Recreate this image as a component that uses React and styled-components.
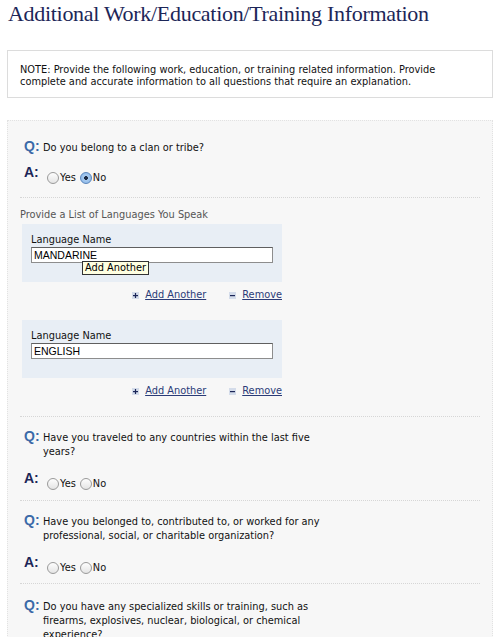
import React from 'react';
import styled, { createGlobalStyle } from 'styled-components';

const GlobalStyle = createGlobalStyle`
	body {
		margin: 0;
		background: #fff;
		font-family: "DejaVu Sans", Verdana, sans-serif;
		color: #111;
	}
`;

const Page = styled.div`
	width: 500px;
	padding: 0 7px;
	box-sizing: border-box;
`;

const Title = styled.h1`
	margin: 0;
	padding: 0 0 0 1px;
	height: 36px;
	line-height: 28px;
	font-family: "Liberation Serif", "Times New Roman", serif;
	font-weight: 400;
	font-size: 22px;
	letter-spacing: -0.3px;
	color: #1c2658;
`;

const NoteBox = styled.div`
	margin-top: 14px;
	height: 48px;
	box-sizing: border-box;
	border: 1px solid #dcdcdc;
	background: #fff;
	padding: 13px 12px 0;
`;

const NoteText = styled.p`
	margin: 0;
	max-width: 435px;
	font-size: 9.8px;
	line-height: 12px;
	color: #111;
`;

const Panel = styled.div`
	margin-top: 22px;
	background: #f7f7f7;
	border: 1px dotted #e2e2e2;
	padding: 0 13px 0 12px;
	height: 540px;
	box-sizing: border-box;
	overflow: hidden;
`;

const Question = styled.div`
	padding: ${({ $top }) => $top || 12}px 0 0 4px;
`;

const QRow = styled.div`
	display: flex;
	align-items: flex-start;
`;

const Letter = styled.span`
	width: 19px;
	flex: none;
	font-family: "Liberation Sans", Arial, sans-serif;
	font-weight: 700;
	font-size: 14px;
	line-height: 14px;
	color: ${({ $blue }) => ($blue ? '#3b6aa8' : '#1c2658')};
`;

const QText = styled.div`
	font-size: 9.8px;
	line-height: 14px;
	padding-top: 2px;
	max-width: 280px;
	color: #111;
`;

const ARow = styled.div`
	display: flex;
	align-items: flex-start;
	margin-top: ${({ $gap }) => $gap}px;
`;

const Options = styled.div`
	display: flex;
	align-items: center;
	gap: 4px;
	padding-top: 6px;
	margin-left: 4px;
`;

const Option = styled.label`
	display: flex;
	align-items: center;
	font-size: 9.8px;
	color: #111;
`;

const Radio = styled.span`
	width: 12px;
	height: 12px;
	border-radius: 50%;
	box-sizing: border-box;
	border: 1px solid ${({ $on }) => ($on ? '#5b86bb' : '#9a9a9a')};
	background: ${({ $on }) =>
		$on
			? 'radial-gradient(circle, #1b2a44 0 1.6px, #a9cbef 2.2px, #7fb0e6 100%)'
			: 'linear-gradient(#fdfdfd, #e4e4e4)'};
	margin-right: 1px;
	margin-top: 1px;
`;

const Divider = styled.div`
	border-top: 1px dotted #d6d6d6;
	margin-top: ${({ $mt }) => $mt}px;
	width: 460px;
`;

const SectionLabel = styled.div`
	margin-top: 11px;
	font-size: 9.8px;
	line-height: 12px;
	color: #555;
`;

const LanguageCard = styled.div`
	margin: ${({ $mt }) => $mt}px 0 0 2px;
	width: 260px;
	height: 58px;
	box-sizing: border-box;
	background: #e8eef5;
	padding: 10px 9px 0;
	position: relative;
`;

const FieldLabel = styled.div`
	font-size: 9.8px;
	line-height: 12px;
	color: #111;
`;

const TextInput = styled.div`
	margin-top: 1px;
	width: 242px;
	height: 16px;
	box-sizing: border-box;
	background: #fff;
	border: 1px solid #8d8d8d;
	border-top-color: #5f5f5f;
	padding: 0 2px;
	font-family: "Liberation Sans", Arial, sans-serif;
	font-size: 10.5px;
	line-height: 14px;
	color: #000;
`;

const Tooltip = styled.div`
	position: absolute;
	left: 60px;
	top: 37px;
	padding: 0 2px;
	background: #ffffe1;
	border: 1px solid #333;
	font-size: 9.8px;
	line-height: 12px;
	color: #000;
`;

const Links = styled.div`
	display: flex;
	justify-content: flex-end;
	gap: 23px;
	width: 262px;
	margin-top: 6px;
	height: 14px;
`;

const LinkItem = styled.a`
	display: flex;
	align-items: center;
	gap: 6px;
	font-size: 9.8px;
	line-height: 12px;
	color: #2a3b77;
	text-decoration: underline;
	cursor: pointer;
`;

const IconBox = styled.span`
	width: 7px;
	height: 7px;
	background: #d4dcea;
	display: flex;
`;

function Icon({ kind }) {
	return (
		<IconBox>
			<svg width="7" height="7" viewBox="0 0 7 7">
				<rect x="1" y="3" width="5" height="1.2" fill="#1c2658" />
				{kind === 'plus' && <rect x="2.9" y="1" width="1.2" height="5" fill="#1c2658" />}
			</svg>
		</IconBox>
	);
}

function YesNo({ answer }) {
	return (
		<Options>
			<Option>
				<Radio $on={answer === 'yes'} />
				Yes
			</Option>
			<Option>
				<Radio $on={answer === 'no'} />
				No
			</Option>
		</Options>
	);
}

function QA({ text, answer, top, gap = 12 }) {
	return (
		<Question $top={top}>
			<QRow>
				<Letter $blue>Q:</Letter>
				<QText>{text}</QText>
			</QRow>
			{answer !== undefined && (
				<ARow $gap={gap}>
					<Letter>A:</Letter>
					<YesNo answer={answer} />
				</ARow>
			)}
		</Question>
	);
}

function Language({ value, tip, mt }) {
	return (
		<>
			<LanguageCard $mt={mt}>
				<FieldLabel>Language Name</FieldLabel>
				<TextInput>{value}</TextInput>
				{tip && <Tooltip>Add Another</Tooltip>}
			</LanguageCard>
			<Links>
				<LinkItem>
					<Icon kind="plus" />
					Add Another
				</LinkItem>
				<LinkItem>
					<Icon kind="minus" />
					Remove
				</LinkItem>
			</Links>
		</>
	);
}

export default function App() {
	return (
		<>
			<GlobalStyle />
			<Page>
				<Title>Additional Work/Education/Training Information</Title>
				<NoteBox>
					<NoteText>
						NOTE: Provide the following work, education, or training related information. Provide
						complete and accurate information to all questions that require an explanation.
					</NoteText>
				</NoteBox>
				<Panel>
					<QA text="Do you belong to a clan or tribe?" answer="no" top={18} gap={10} />
					<Divider $mt={13} />
					<SectionLabel>Provide a List of Languages You Speak</SectionLabel>
					<Language value="MANDARINE" tip mt={3} />
					<Language value="ENGLISH" mt={18} />
					<Divider $mt={18} />
					<QA text="Have you traveled to any countries within the last five years?" answer="" />
					<Divider $mt={10} />
					<QA text="Have you belonged to, contributed to, or worked for any professional, social, or charitable organization?" answer="" />
					<Divider $mt={9} />
					<QA text="Do you have any specialized skills or training, such as firearms, explosives, nuclear, biological, or chemical experience?" top={14} />
				</Panel>
			</Page>
		</>
	);
}
